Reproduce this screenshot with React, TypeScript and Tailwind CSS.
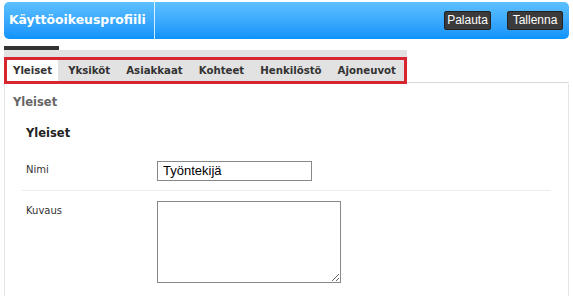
import React, { useState } from 'react';

const tabs = ['Yleiset', 'Yksiköt', 'Asiakkaat', 'Kohteet', 'Henkilöstö', 'Ajoneuvot'];

const App: React.FC = () => {
  const [active, setActive] = useState(0);
  const [name, setName] = useState('Työntekijä');

  return (
    <div className="w-[573px] h-[296px] bg-white overflow-hidden font-['DejaVu_Sans',Verdana,sans-serif]">
      {/* header */}
      <div className="mx-[4px] mt-[2px] h-[37px] rounded-[5px] bg-gradient-to-b from-[#5cc0ff] to-[#0b93fb] flex items-stretch">
        <div className="w-[151px] border-r border-white/80 flex items-center pl-[5px]">
          <span className="text-white font-bold text-[12.4px]">Käyttöoikeusprofiili</span>
        </div>
        <div className="flex-1 flex items-center justify-end gap-[16px] pr-[6px] pb-[1px]">
          <button className="w-[47px] h-[19px] bg-[#3b3b3b] border border-[#222] rounded-[2px] text-white text-[12px] font-['Liberation_Sans',Arial,sans-serif] leading-none">
            Palauta
          </button>
          <button className="w-[56px] h-[19px] bg-[#3b3b3b] border border-[#222] rounded-[2px] text-white text-[12px] font-['Liberation_Sans',Arial,sans-serif] leading-none">
            Tallenna
          </button>
        </div>
      </div>

      {/* tab bar */}
      <div className="ml-[4px] mt-[7px] w-[55px] h-[4px] bg-[#333]" />
      <div className="flex items-end">
        <div className="ml-[4px] w-[403px] bg-[#e2e2e2] pt-[7px]">
          <div className="h-[27px] border-[3px] border-[#d7262f] flex items-stretch">
            {tabs.map((t, i) => (
              <button
                key={t}
                onClick={() => setActive(i)}
                className={`px-[6px] mr-[4px] text-[10.2px] font-bold text-[#333] ${i === active ? 'bg-white' : ''}`}
              >
                {t}
              </button>
            ))}
          </div>
        </div>
        <div className="w-[162px] h-px bg-[#d8d8d8] mb-px" />
      </div>

      {/* content */}
      <div className="mx-[4px] h-[220px] border-l border-r border-[#e3e3e3] pt-[10px]">
        <div className="pl-[8px] text-[11.5px] font-bold text-[#666]">Yleiset</div>
        <div className="pl-[21px] mt-[14px] text-[11.5px] font-bold text-[#222]">Yleiset</div>
        <div className="mx-[17px] mt-[18px] flex items-start border-b border-[#ececec] pb-[9px]">
          <span className="pl-[4px] w-[135px] text-[10px] text-[#333] pt-[1px]">Nimi</span>
          <input
            value={name}
            onChange={(e) => setName(e.target.value)}
            className="w-[155px] h-[20px] border border-[#888] px-[5px] text-[13px] text-black font-['Liberation_Sans',Arial,sans-serif] outline-none"
          />
        </div>
        <div className="mx-[17px] mt-[10px] flex items-start">
          <span className="pl-[4px] w-[135px] text-[10px] text-[#333] pt-[2px]">Kuvaus</span>
          <textarea className="w-[184px] h-[82px] border border-[#888] outline-none resize" />
        </div>
      </div>
    </div>
  );
};

export default App;
